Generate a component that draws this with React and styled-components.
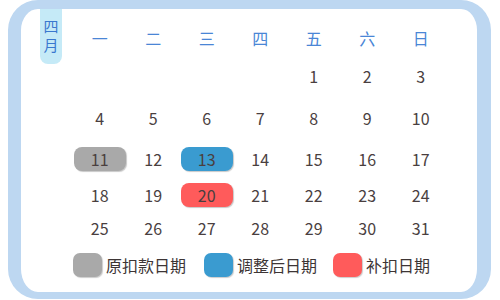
import React from "react";
import styled, { createGlobalStyle } from "styled-components";

const Global = createGlobalStyle`
  html, body { margin: 0; padding: 0; background: #ffffff; }
  body { font-family: "Noto Sans CJK SC", "Noto Sans", sans-serif; }
`;

const Frame = styled.div`
  box-sizing: border-box;
  margin-left: 8px;
  width: 483px;
  height: 299px;
  border-style: solid;
  border-color: #bdd7f1;
  border-width: 9px 14px 7px 13px;
  border-radius: 30px;
  background: #ffffff;
  display: flex;
  flex-direction: column;
`;

const Header = styled.div`
  display: flex;
  align-items: flex-start;
  height: 55px;
`;

const MonthBadge = styled.div`
  box-sizing: border-box;
  margin-left: 19px;
  margin-right: 11px;
  width: 22px;
  height: 55px;
  background: #c5eaf7;
  border-radius: 0 0 8px 8px;
  display: flex;
  flex-direction: column;
  align-items: center;
  padding-top: 7px;
  font-family: "Noto Sans CJK SC", sans-serif;
  font-size: 15px;
  line-height: 19px;
  color: #3a78cf;
`;

const Weekdays = styled.div`
  display: grid;
  grid-template-columns: repeat(7, 53.5px);
  margin-top: 19px;
`;

const Weekday = styled.div`
  text-align: center;
  font-family: "Noto Sans CJK SC", sans-serif;
  font-size: 16px;
  line-height: 20px;
  color: #4a86d6;
`;

const Days = styled.div`
  display: grid;
  grid-template-columns: repeat(7, 53.5px);
  grid-template-rows: 42px 41px 36px 33px 24px;
  align-items: start;
  margin-left: 52px;
`;

const Day = styled.div`
  height: 24px;
  margin: 0 0.5px;
  border-radius: 8px;
  display: flex;
  align-items: center;
  justify-content: center;
  font-family: "Noto Sans CJK SC", sans-serif;
  font-size: 16px;
  color: #4a3f3f;
  background: ${(p) => p.$bg || "transparent"};
  box-shadow: ${(p) => (p.$bg ? "1px 1px 1px rgba(0,0,0,0.22)" : "none")};
`;

const Legend = styled.div`
  display: flex;
  align-items: center;
  margin-top: 13px;
  margin-left: 52px;
`;

const LegendItem = styled.div`
  display: flex;
  align-items: center;
  margin-right: ${(p) => p.$gap}px;
`;

const Swatch = styled.div`
  width: 29px;
  height: 24px;
  border-radius: 7px;
  background: ${(p) => p.$color};
  box-shadow: 1px 1px 1px rgba(0,0,0,0.2);
  margin-right: 4px;
`;

const LegendText = styled.span`
  font-family: "Noto Sans CJK SC", sans-serif;
  font-size: 16px;
  line-height: 24px;
  color: #3d3535;
`;

const weekdays = ["一", "二", "三", "四", "五", "六", "日"];
const highlights = { 11: "#a9a9a9", 13: "#3a9bd0", 20: "#ff5b5b" };

export default function App() {
  const cells = [];
  for (let i = 0; i < 4; i++) cells.push(null);
  for (let d = 1; d <= 31; d++) cells.push(d);
  return (
    <>
      <Global />
      <Frame>
        <Header>
          <MonthBadge>
            <span>四</span>
            <span>月</span>
          </MonthBadge>
          <Weekdays>
            {weekdays.map((w) => (
              <Weekday key={w}>{w}</Weekday>
            ))}
          </Weekdays>
        </Header>
        <Days>
          {cells.map((d, i) => (
            <Day key={i} $bg={d ? highlights[d] : undefined}>
              {d || ""}
            </Day>
          ))}
        </Days>
        <Legend>
          <LegendItem $gap={18}>
            <Swatch $color="#a9a9a9" />
            <LegendText>原扣款日期</LegendText>
          </LegendItem>
          <LegendItem $gap={16}>
            <Swatch $color="#3a9bd0" />
            <LegendText>调整后日期</LegendText>
          </LegendItem>
          <LegendItem $gap={0}>
            <Swatch $color="#ff5b5b" />
            <LegendText>补扣日期</LegendText>
          </LegendItem>
        </Legend>
      </Frame>
    </>
  );
}
